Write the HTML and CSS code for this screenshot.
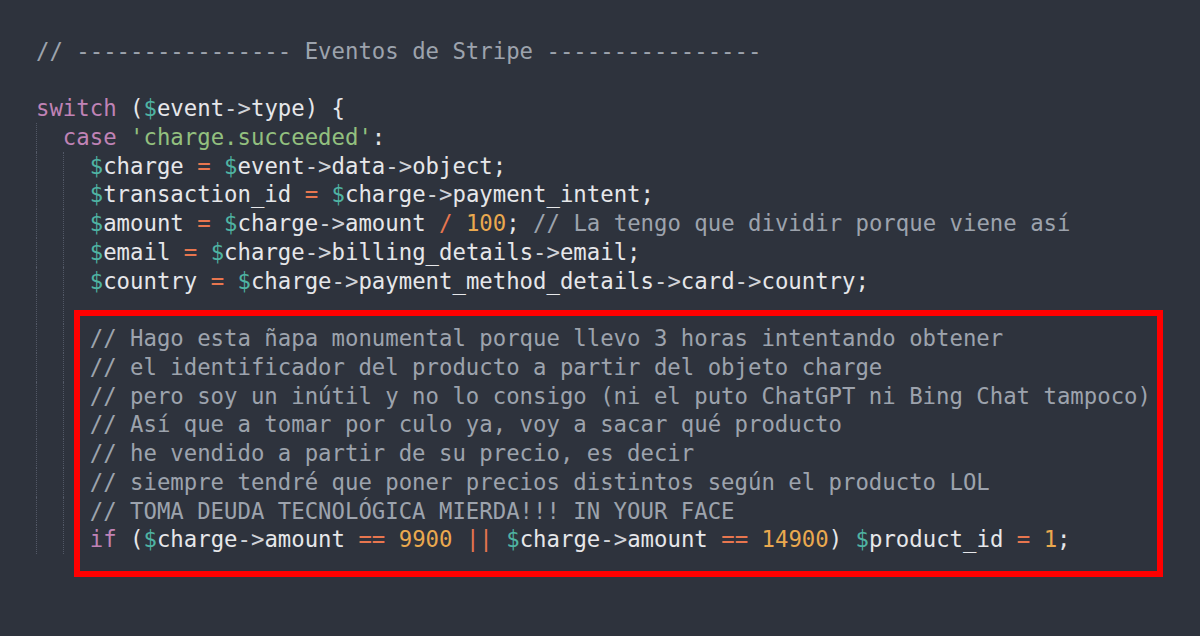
FILE: index.html
```html
<!DOCTYPE html>
<html lang="es">
<head>
<meta charset="utf-8">
<title>Eventos de Stripe</title>
<link rel="stylesheet" href="styles.css">
</head>
<body>
<div class="editor">
<div class="code">
<div class="line"><span class="c">// ---------------- Eventos de Stripe ----------------</span></div>
<div class="line"></div>
<div class="line"><span class="k">switch</span> (<span class="d">$</span>event<span class="a">-&gt;</span>type) {</div>
<div class="line"><span class="ind"></span><span class="k">case</span> <span class="s">'charge.succeeded'</span>:</div>
<div class="line"><span class="ind"></span><span class="ind"></span><span class="d">$</span>charge <span class="o">=</span> <span class="d">$</span>event<span class="a">-&gt;</span>data<span class="a">-&gt;</span>object;</div>
<div class="line"><span class="ind"></span><span class="ind"></span><span class="d">$</span>transaction_id <span class="o">=</span> <span class="d">$</span>charge<span class="a">-&gt;</span>payment_intent;</div>
<div class="line"><span class="ind"></span><span class="ind"></span><span class="d">$</span>amount <span class="o">=</span> <span class="d">$</span>charge<span class="a">-&gt;</span>amount <span class="o">/</span> <span class="n">100</span>; <span class="c">// La tengo que dividir porque viene así</span></div>
<div class="line"><span class="ind"></span><span class="ind"></span><span class="d">$</span>email <span class="o">=</span> <span class="d">$</span>charge<span class="a">-&gt;</span>billing_details<span class="a">-&gt;</span>email;</div>
<div class="line"><span class="ind"></span><span class="ind"></span><span class="d">$</span>country <span class="o">=</span> <span class="d">$</span>charge<span class="a">-&gt;</span>payment_method_details<span class="a">-&gt;</span>card<span class="a">-&gt;</span>country;</div>
<div class="line"><span class="ind"></span><span class="ind"></span></div>
<div class="line"><span class="ind"></span><span class="ind"></span><span class="c">// Hago esta ñapa monumental porque llevo 3 horas intentando obtener</span></div>
<div class="line"><span class="ind"></span><span class="ind"></span><span class="c">// el identificador del producto a partir del objeto charge</span></div>
<div class="line"><span class="ind"></span><span class="ind"></span><span class="c">// pero soy un inútil y no lo consigo (ni el puto ChatGPT ni Bing Chat tampoco)</span></div>
<div class="line"><span class="ind"></span><span class="ind"></span><span class="c">// Así que a tomar por culo ya, voy a sacar qué producto</span></div>
<div class="line"><span class="ind"></span><span class="ind"></span><span class="c">// he vendido a partir de su precio, es decir</span></div>
<div class="line"><span class="ind"></span><span class="ind"></span><span class="c">// siempre tendré que poner precios distintos según el producto LOL</span></div>
<div class="line"><span class="ind"></span><span class="ind"></span><span class="c">// TOMA DEUDA TECNOLÓGICA MIERDA!!! IN YOUR FACE</span></div>
<div class="line"><span class="ind"></span><span class="ind"></span><span class="k">if</span> (<span class="d">$</span>charge<span class="a">-&gt;</span>amount <span class="o">==</span> <span class="n">9900</span> <span class="o">||</span> <span class="d">$</span>charge<span class="a">-&gt;</span>amount <span class="o">==</span> <span class="n">14900</span>) <span class="d">$</span>product_id <span class="o">=</span> <span class="n">1</span>;</div>
<div class="line"></div>
</div>
<div class="highlight"></div>
</div>
</body>
</html>
```
FILE: styles.css
```css
html, body {
  margin: 0;
  padding: 0;
  background: #2e333d;
}
.editor {
  position: relative;
  width: 1200px;
  height: 636px;
  overflow: hidden;
  background: #2e333d;
}
.code {
  padding: 36.6px 0 0 36px;
  font-family: "DejaVu Sans Mono", "Liberation Mono", monospace;
  font-size: 22.32px;
  color: #e6e7ea;
}
.line {
  height: 28.75px;
  line-height: 28.75px;
  white-space: pre;
}
.ind {
  display: inline-block;
  width: 2ch;
  height: 28.75px;
  vertical-align: top;
  box-sizing: border-box;
  border-left: 1px dotted #525866;
}
.c { color: #9da3ad; }
.k { color: #c083b6; }
.s { color: #93c07f; }
.d { color: #4fb3a3; }
.o { color: #e8764f; }
.n { color: #eaa94f; }
.a { color: #cfd2d8; }
.highlight {
  position: absolute;
  left: 74px;
  top: 310px;
  width: 1089px;
  height: 267px;
  box-sizing: border-box;
  border: 6px solid #ff0000;
}
```
